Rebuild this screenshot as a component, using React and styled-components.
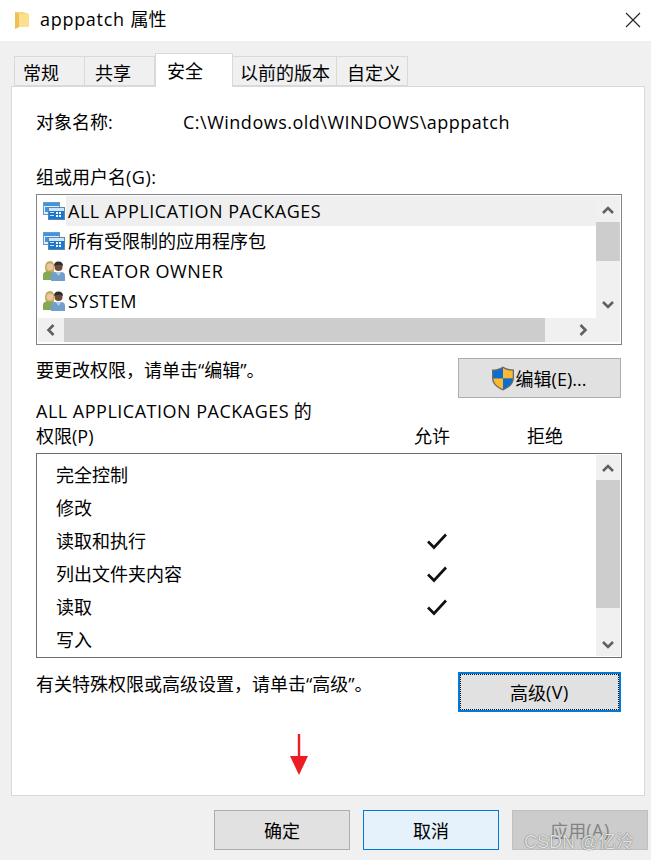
import React from "react";
import styled, { createGlobalStyle } from "styled-components";

const Global = createGlobalStyle`
  html, body { margin: 0; padding: 0; background: #f0f0f0; }
  * { box-sizing: border-box; }
`;

const Dialog = styled.div`
  position: relative;
  width: 651px;
  height: 860px;
  overflow: hidden;
  background: #f0f0f0;
  color: #000;
  font-family: "Open Sans", "Noto Sans CJK SC", sans-serif;
  font-size: 18px;
`;
const Latin = styled.span`
  letter-spacing: 0.5px;
`;
const TitleBar = styled.header`
  height: 41px;
  background: #fff;
  display: flex;
  align-items: center;
  padding: 0 10px 2px 15px;
`;
const Title = styled.div`
  margin: 0 0 4px 11px;
  flex: 1;
  font-size: 18px;
`;
const TitleLatin = styled.span`
  letter-spacing: 0.7px;
  margin-right: 1px;
`;
const TabStrip = styled.div`
  height: 45px;
  padding-left: 14px;
  display: flex;
  align-items: flex-end;
`;
const Tab = styled.div`
  width: ${p => p.$w}px;
  height: ${p => (p.$active ? 34 : 30)}px;
  margin-bottom: ${p => (p.$active ? -1 : 0)}px;
  background: ${p => (p.$active ? "#fff" : "#f0f0f0")};
  border: 1px solid #d9d9d9;
  border-bottom: ${p => (p.$active ? "none" : "1px solid #d9d9d9")};
  border-left-width: ${p => (p.$first || p.$active ? 1 : 0)}px;
  position: relative;
  z-index: ${p => (p.$active ? 2 : 0)};
  display: flex;
  align-items: center;
  padding-left: ${p => p.$pad}px;
  padding-top: ${p => (p.$active ? 0 : 4)}px;
  line-height: 1;
  white-space: nowrap;
`;
const Panel = styled.main`
  position: relative;
  height: 710px;
  margin: 0 6px 0 11px;
  padding: 21px 22px 0 24px;
  background: #fff;
  border: 1px solid #d9d9d9;
`;
const ObjectRow = styled.div`
  display: flex;
  height: 28px;
  line-height: 28px;
`;
const ObjectLabel = styled.div`
  width: 147px;
`;
const GroupLabel = styled.div`
  height: 28px;
  line-height: 28px;
  margin-top: 27px;
`;
const ListBox = styled.div`
  margin-top: 3px;
  height: 151px;
  border: 1px solid #82828c;
  padding: 1px 1px 2px 1px;
  display: grid;
  grid-template-columns: 1fr 24px;
  grid-template-rows: 120px 2px 24px;
`;
const Rows = styled.div`
  display: flex;
  flex-direction: column;
  overflow: hidden;
`;
const Row = styled.div`
  height: 30px;
  display: flex;
  align-items: center;
  padding-left: 5px;
`;
const RowLabel = styled.div`
  height: 30px;
  line-height: 30px;
  flex: 1;
  padding-left: 2px;
  margin-left: 1px;
  background: ${p => (p.$selected ? "#efefef" : "transparent")};
  white-space: nowrap;
`;
const VBar = styled.div`
  background: #f0f0f0;
  display: flex;
  flex-direction: column;
  grid-column: 2;
  grid-row: 1 / 4;
`;
const BarButton = styled.div`
  flex: none;
  height: ${p => p.$h}px;
  width: 100%;
  display: flex;
  align-items: center;
  justify-content: center;
  padding-top: ${p => p.$top || 0}px;
`;
const VThumb = styled.div`
  flex: none;
  width: 100%;
  height: ${p => p.$h}px;
  background: #cdcdcd;
`;
const Spacer = styled.div`
  flex: 1;
`;
const HBar = styled.div`
  grid-column: 1;
  grid-row: 3;
  background: #f0f0f0;
  display: flex;
`;
const HButton = styled.div`
  flex: none;
  width: 26px;
  display: flex;
  align-items: center;
  justify-content: center;
`;
const HThumb = styled.div`
  flex: none;
  width: 481px;
  background: #cdcdcd;
`;
const ActionRow = styled.div`
  display: flex;
  justify-content: space-between;
  margin-top: ${p => p.$mt}px;
  margin-right: 1px;
`;
const Hint = styled.div`
  line-height: 24px;
`;
const Button = styled.div`
  width: ${p => p.$w || 136}px;
  height: 40px;
  flex: none;
  display: flex;
  align-items: center;
  justify-content: center;
  background: #e1e1e1;
  border: 1px solid #adadad;
  position: relative;
`;
const EditButton = styled(Button)`
  padding-right: 2px;
`;
const FocusButton = styled(Button)`
  border: 2px solid #0078d7;
  &::after {
    content: "";
    position: absolute;
    inset: 0;
    border: 1px dotted #111;
  }
`;
const CancelButton = styled(Button)`
  background: #e5f1fb;
  border-color: #0078d7;
`;
const DisabledButton = styled(Button)`
  background: #cccccc;
  border-color: #bfbfbf;
  color: #838383;
`;
const PermHeading = styled.div`
  margin-top: 1px;
  line-height: 25px;
  height: 25px;
`;
const PermHeader = styled.div`
  display: flex;
  line-height: 25px;
  height: 25px;
`;
const PermName = styled.div`
  width: 378px;
`;
const PermAllow = styled.div`
  width: 113px;
`;
const PermList = styled.div`
  margin-top: 4px;
  height: 205px;
  border: 1px solid #6e6e6e;
  padding: 1px;
  display: flex;
`;
const PermRows = styled.div`
  flex: 1;
  padding: 4px 0 0 18px;
  overflow: hidden;
`;
const PermRow = styled.div`
  height: 33px;
  line-height: 33px;
  display: flex;
  align-items: center;
`;
const PermLabel = styled.div`
  width: 369px;
`;
const CheckWrap = styled.span`
  display: flex;
  margin: 0 0 2px 1px;
`;
const Side = styled.div`
  width: 24px;
  flex: none;
  background: #f0f0f0;
  display: flex;
  flex-direction: column;
`;
const Footer = styled.footer`
  margin-top: 14px;
  padding-left: 214px;
  display: flex;
  gap: 13px;
`;
const Arrow = styled.svg`
  position: absolute;
  left: 277px;
  top: 647px;
`;
const Watermark = styled.div`
  position: absolute;
  left: 524px;
  top: 828px;
  font-family: "Liberation Sans", "Noto Sans CJK SC", sans-serif;
  font-size: 18px;
  line-height: 28px;
  color: rgba(255, 255, 255, 0.85);
  text-shadow: 0 0 1px #333;
  white-space: nowrap;
`;
const ShieldWrap = styled.span`
  display: flex;
  margin-right: 1px;
`;

const Folder = () => (
  <svg width="14" height="20" viewBox="0 0 14 20">
    <path d="M0 2 H8 L14 4 V17 H4 L0 19 Z" fill="#f8d775" />
    <path d="M4 4 H14 V17 H4 Z" fill="#fbe08f" />
    <path d="M0 2 L4 4 V17 L0 19 Z" fill="#eec055" />
  </svg>
);
const Close = () => (
  <svg width="16" height="16" viewBox="0 0 16 16">
    <path d="M1 1 L15 15 M15 1 L1 15" stroke="#222" strokeWidth="1.1" />
  </svg>
);
const Chevron = ({ dir }) => {
  const d = {
    up: "M1 8 L6 3 L11 8",
    down: "M1 4 L6 9 L11 4",
    left: "M8.5 1 L3.5 6 L8.5 11",
    right: "M3.5 1 L8.5 6 L3.5 11",
  }[dir];
  return (
    <svg width="12" height="12" viewBox="0 0 12 12">
      <path d={d} fill="none" stroke="#606060" strokeWidth="2.6" />
    </svg>
  );
};
const Packages = () => (
  <svg width="22" height="18" viewBox="0 0 22 18">
    <rect x="0.5" y="0.5" width="16" height="12" fill="#e4eef7" stroke="#6d9ac0" />
    <rect x="1" y="1" width="15" height="3" fill="#3f94e4" />
    <rect x="2" y="5" width="4" height="5" fill="#3f94e4" />
    <rect x="5.5" y="5.5" width="16" height="12" fill="#1a78d0" stroke="#5f88a8" />
    <rect x="6" y="6" width="15" height="3" fill="#cfe4f6" />
    <rect x="13" y="10" width="2" height="2" fill="#fff" />
    <rect x="16" y="10" width="2" height="2" fill="#fff" />
    <rect x="13" y="13" width="2" height="2" fill="#fff" />
    <rect x="16" y="13" width="2" height="2" fill="#fff" />
    <rect x="7" y="10" width="4" height="1" fill="#cfe6f8" />
    <rect x="7" y="13" width="4" height="1" fill="#cfe6f8" />
  </svg>
);
const Users = () => (
  <svg width="22" height="20" viewBox="0 0 22 20">
    <path d="M2 7 Q2 0 7 0 Q11 0 11 5 V11 H3 Z" fill="#c9a860" />
    <circle cx="7" cy="6" r="3.4" fill="#e8c9a0" />
    <path d="M0 19 V14 Q0 10.5 4 10.5 H8 Q11 10.5 11 13 V19 Z" fill="#84a853" />
    <circle cx="15.5" cy="6" r="4" fill="#6b4a35" />
    <path d="M11 5 Q11 0.5 15.5 0.5 Q20 0.5 20 5 Q16 2.5 11 5 Z" fill="#2d2b2b" />
    <path d="M8 20 V15 Q8 11 12 11 H18 Q22 11 22 15 V20 Z" fill="#6f9fca" />
    <path d="M12.5 11 H18.5 L15.5 15 Z" fill="#b5d0e6" />
  </svg>
);
const Shield = () => (
  <svg width="24" height="25" viewBox="0 0 24 25">
    <path d="M12 0.5 C8 3 4.5 3.5 1 3.5 V12 C1 18 6 22 12 24.5 C18 22 23 18 23 12 V3.5 C19.5 3.5 16 3 12 0.5 Z" fill="#6b6b6b" />
    <path d="M12 2 V12.5 H2.3 V4.8 C6 4.8 9 4.2 12 2 Z" fill="#0a6ed1" />
    <path d="M12 2 C15 4.2 18 4.8 21.7 4.8 V12.5 H12 Z" fill="#fbb92f" />
    <path d="M2.3 12.5 H12 V23 C7 21 2.6 17.5 2.3 12.5 Z" fill="#fbb92f" />
    <path d="M12 12.5 H21.7 C21.4 17.5 17 21 12 23 Z" fill="#0a6ed1" />
  </svg>
);
const Check = () => (
  <svg width="22" height="18" viewBox="0 0 22 18">
    <path d="M2 9.5 L8 15.5 L20 2.5" fill="none" stroke="#111" strokeWidth="2.7" />
  </svg>
);

const users = [
  [<Latin>ALL APPLICATION PACKAGES</Latin>, Packages, true],
  ["所有受限制的应用程序包", Packages, false],
  [<Latin>CREATOR OWNER</Latin>, Users, false],
  [<Latin>SYSTEM</Latin>, Users, false],
];
const perms = [
  ["完全控制", false],
  ["修改", false],
  ["读取和执行", true],
  ["列出文件夹内容", true],
  ["读取", true],
  ["写入", false],
];
const tabs = [
  ["常规", 71, 8],
  ["共享", 70, 10],
  ["安全", 78, 11, true],
  ["以前的版本", 104, 7],
  ["自定义", 71, 10],
];

export default function App() {
  return (
    <Dialog>
      <Global />
      <TitleBar>
        <Folder />
        <Title><TitleLatin>apppatch</TitleLatin> 属性</Title>
        <Close />
      </TitleBar>
      <TabStrip>
        {tabs.map(([t, w, pad, a], i) => (
          <Tab key={t} $w={w} $pad={pad} $active={a} $first={i === 0}>{t}</Tab>
        ))}
      </TabStrip>
      <Panel>
        <ObjectRow>
          <ObjectLabel>对象名称:</ObjectLabel>
          <Latin>C:\Windows.old\WINDOWS\apppatch</Latin>
        </ObjectRow>
        <GroupLabel>组或用户名<Latin>(G):</Latin></GroupLabel>
        <ListBox>
          <Rows>
            {users.map(([name, Icon, sel], i) => (
              <Row key={i}>
                <Icon />
                <RowLabel $selected={sel}>{name}</RowLabel>
              </Row>
            ))}
          </Rows>
          <VBar>
            <BarButton $h={26} $top={4}><Chevron dir="up" /></BarButton>
            <VThumb $h={39} />
            <Spacer />
            <BarButton $h={26}><Chevron dir="down" /></BarButton>
            <BarButton $h={25} />
          </VBar>
          <HBar>
            <HButton><Chevron dir="left" /></HButton>
            <HThumb />
            <Spacer />
            <HButton><Chevron dir="right" /></HButton>
          </HBar>
        </ListBox>
        <ActionRow $mt={13}>
          <Hint>{"要更改权限\uFF0C请单击“编辑”。"}</Hint>
          <EditButton $w={163}>
            <ShieldWrap><Shield /></ShieldWrap>
            编辑(E)...
          </EditButton>
        </ActionRow>
        <PermHeading><Latin>ALL APPLICATION PACKAGES</Latin> 的</PermHeading>
        <PermHeader>
          <PermName>权限(P)</PermName>
          <PermAllow>允许</PermAllow>
          <div>拒绝</div>
        </PermHeader>
        <PermList>
          <PermRows>
            {perms.map(([name, ok]) => (
              <PermRow key={name}>
                <PermLabel>{name}</PermLabel>
                {ok && <CheckWrap><Check /></CheckWrap>}
              </PermRow>
            ))}
          </PermRows>
          <Side>
            <BarButton $h={25} $top={3}><Chevron dir="up" /></BarButton>
            <VThumb $h={128} />
            <Spacer />
            <BarButton $h={25}><Chevron dir="down" /></BarButton>
          </Side>
        </PermList>
        <ActionRow $mt={14}>
          <Hint>{"有关特殊权限或高级设置\uFF0C请单击“高级”。"}</Hint>
          <FocusButton $w={163}>高级<Latin>(V)</Latin></FocusButton>
        </ActionRow>
        <Arrow width="20" height="42" viewBox="0 0 20 42">
          <path d="M10 0 V24" stroke="#ed1c24" strokeWidth="2.4" />
          <path d="M1 22 H19 L10 41 Z" fill="#ed1c24" />
        </Arrow>
      </Panel>
      <Footer>
        <Button>确定</Button>
        <CancelButton>取消</CancelButton>
        <DisabledButton>应用<Latin>(A)</Latin></DisabledButton>
      </Footer>
      <Watermark>CSDN @亿泠</Watermark>
    </Dialog>
  );
}
